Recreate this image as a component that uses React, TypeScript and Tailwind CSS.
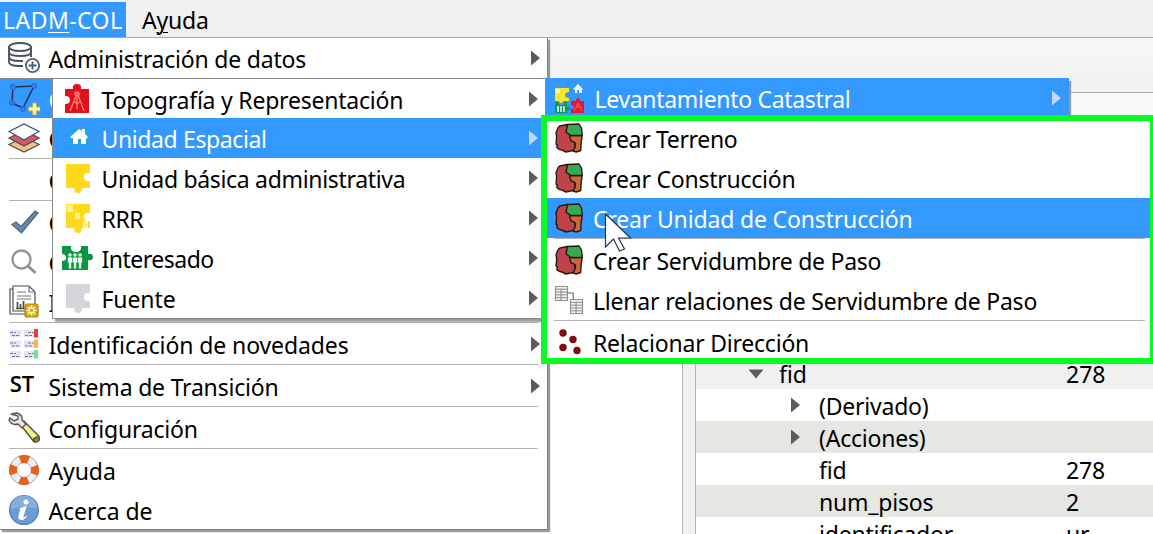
import type { ReactNode } from "react";

function Arrow({ light = false }: { light?: boolean }) {
  return (
    <svg width="9" height="16" viewBox="0 0 9 16" className="shrink-0">
      <path d="M0 0.5 L9 8 L0 15.5 Z" fill={light ? "#b9d9ff" : "#5c5c5c"} />
    </svg>
  );
}

function DatabaseIcon() {
  return (
    <svg width="32" height="32" viewBox="0 0 32 32" fill="none" stroke="#4a535d" strokeWidth="1.9">
      <ellipse cx="12" cy="5" rx="11" ry="4" fill="#fff" />
      <path d="M1 5v15c0 2.6 5 4 11 4h3M23 5v10M1 10c0 2.600 5 4 11 4s11-1.400 11-4M1 15c0 2.600 5 4 11 4h3" />
      <circle cx="24.500" cy="23.500" r="6.600" fill="#fff" stroke="#566573" />
      <path d="M24.500 19.500v8M20.500 23.500h8" stroke="#43617c" />
    </svg>
  );
}

function PolygonIcon() {
  return (
    <svg width="32" height="32" viewBox="0 0 32 32" fill="none">
      <path d="M5 4L26 3L15 25L4 20Z" stroke="#26344c" strokeWidth="1.500" />
      <g fill="#2f80ed" stroke="#2265cc">
        <circle cx="5" cy="4" r="2.500" />
        <circle cx="26" cy="3" r="2.500" />
        <circle cx="4" cy="20" r="2.500" />
        <circle cx="15" cy="26" r="2.500" />
      </g>
      <path d="M24.500 20h4v4h4v4h-4v4h-4v-4h-4v-4h4z" fill="#fdf8a0" stroke="#a8ae63" />
    </svg>
  );
}

function LayersIcon() {
  return (
    <svg width="32" height="30" viewBox="0 0 32 30" stroke="#4c4f59" strokeWidth="1.200">
      <path d="M1 21.500L16 14l15 7.500L16 29z" fill="#f9c184" />
      <path d="M1 15L16 7.500L31 15l-15 8z" fill="#d9596a" />
      <path d="M1 8.500L16 1l15 7.500L16 17z" fill="#fcfdff" stroke="#3f5069" />
    </svg>
  );
}

function CheckIcon() {
  return (
    <svg width="28" height="24" viewBox="0 0 28 24" className="ml-0.5">
      <path d="M1 14.500l4-2.500 5 4.500L24 1l3 2L10.500 23z" fill="#5b8fb9" stroke="#55616c" strokeWidth="1.200" />
    </svg>
  );
}

function SearchIcon() {
  return (
    <svg width="26" height="26" viewBox="0 0 26 26" fill="none" stroke="#929292">
      <circle cx="10.500" cy="10.500" r="9" strokeWidth="2.300" />
      <path d="M17 17l7.500 7" strokeWidth="3" />
    </svg>
  );
}

function ReportIcon() {
  return (
    <svg width="30" height="34" viewBox="0 0 30 34" fill="none" stroke="#4d4d4d" strokeWidth="1.200">
      <path d="M4 4H1v25h17" />
      <path d="M4 1h16l6 6v19H4z" fill="#fff" />
      <path d="M20 1v6h6M8 7h9M8 11h14M8 14h14" stroke="#777" />
      <path d="M8.500 17v6M11.500 19v4M14.500 16v7M7 23.500h11" strokeWidth="1.700" />
      <rect x="16" y="19" width="13" height="13" rx="2" fill="#d8a51a" stroke="#b88706" />
      <path d="M22.500 20.500v10M17.500 25.500h10M19 22l7 7M26 22l-7 7" stroke="#fffbd0" strokeWidth="1.700" />
      <circle cx="22.500" cy="25.500" r="1.700" fill="#d8a51a" stroke="none" />
    </svg>
  );
}

function ChangesIcon() {
  const marks = [
    { y: 1, color: "#e83b4a" },
    { y: 11.5, color: "#fbb64d" },
    { y: 22, color: "#6be39b" },
  ];
  return (
    <svg width="30" height="30" viewBox="0 0 30 30">
      {marks.map(({ y, color }) => (
        <g key={y}>
          <rect x="1" y={y} width="11" height="7" fill="#e4e4f4" />
          <path d={`M1 ${y + 2.5}h6M3 ${y + 5.5}h8`} stroke="#77778e" strokeDasharray="3 1" />
          <rect x="15" y={y} width="10" height="7" fill="#e4e4f4" />
          <path d={`M19 ${y + 2.5}h6M16 ${y + 5.5}h8`} stroke="#77778e" strokeDasharray="3 1" />
          <rect x="25" y={y - 1} width="4" height="8.500" fill={color} />
        </g>
      ))}
    </svg>
  );
}

function WrenchIcon() {
  return (
    <svg width="34" height="32" viewBox="0 0 34 32">
      <path d="M13 12l4-3 15 15q1 4-5 6z" fill="#e3df78" stroke="#4c4c2b" strokeWidth="1.300" />
      <path d="M17 14l11 11" stroke="#fbf7b6" strokeWidth="2" />
      <path
        d="M4 2l6-1q6 2 5 7l4 4-4 4-4-4q-6 2-9-4l1-2 4 3 4-2V4z"
        fill="#e9e9e9"
        stroke="#555"
        strokeWidth="1.400"
      />
      <ellipse cx="29.500" cy="27.500" rx="3" ry="2.500" fill="#858252" stroke="#45452d" transform="rotate(-30 29.500 27.500)" />
    </svg>
  );
}

function LifebuoyIcon() {
  return (
    <svg width="32" height="32" viewBox="0 0 32 32" fill="none">
      <circle cx="16" cy="16" r="11" stroke="#eef0f2" strokeWidth="7.500" />
      <circle cx="16" cy="16" r="14.300" stroke="#b9bec4" strokeWidth="1.200" />
      <circle cx="16" cy="16" r="7.500" stroke="#b4b9be" />
      <circle
        cx="16"
        cy="16"
        r="11"
        stroke="#e6601e"
        strokeWidth="8"
        strokeDasharray="8.600 8.679"
        strokeDashoffset="4.300"
      />
    </svg>
  );
}

function InfoIcon() {
  return (
    <svg width="32" height="32" viewBox="0 0 32 32">
      <circle cx="16" cy="16" r="14.300" fill="#6c9bd2" stroke="#5585c4" strokeWidth="1.500" />
      <path d="M2.500 15a13.500 13.500 0 0 1 27 0q-13-4-27 0z" fill="#83aede" />
      <circle cx="18" cy="8" r="2.500" fill="#fff" />
      <path d="M12 14.500q3-.5 6-2l-3 10q-.5 2.500 3.500 0-3 4-6.500 3-2-.8-1-4l1.500-5z" fill="#fff" stroke="#fff" />
    </svg>
  );
}

function SurveyorIcon() {
  return (
    <svg width="24" height="30" viewBox="0 0 24 30">
      <path d="M0 5h8q-1-5 4-5t4 5h8v24H0v-9q5 0 5-4t-5-4z" fill="#e3101b" />
      <g fill="none" stroke="#ff8380" strokeWidth="1.300">
        <path d="M11.500 11L5 27M13 11l6 16M12 9v16M9 17l3 3 4-3" />
        <circle cx="12" cy="10" r="2" />
      </g>
    </svg>
  );
}

function HousePuzzleIcon() {
  return (
    <svg width="24" height="28" viewBox="0 0 24 28" className="ml-1">
      <path d="M0 4h24v20h-8q0 4-4 4t-4-4H0z" fill="#29a0ee" />
      <path d="M3 13l9-8 3 2V5h3v5l3 3-2 2v5h-5v-5h-3v5H6v-6H4z" fill="#fff" />
    </svg>
  );
}

function PuzzleIcon({ tone = "yellow", patches = false }: { tone?: "yellow" | "gray"; patches?: boolean }) {
  return (
    <svg width="24" height="30" viewBox="0 0 24 30" className="ml-0.5">
      <path
        d="M0 1h24v9q-6-1-6 4t6 4v7h-8q0 5-4 5t-4-5H0z"
        fill={tone === "yellow" ? "#ffd91b" : "#d4d4da"}
      />
      {patches && (
        <g fill="#fff19b">
          <rect x="1" y="2" width="6" height="7" />
          <rect x="9" y="10" width="5" height="6" />
          <rect x="17" y="18" width="5" height="7" />
        </g>
      )}
    </svg>
  );
}

function PeoplePuzzleIcon() {
  return (
    <svg width="31" height="26" viewBox="0 0 31 26">
      <path d="M0 1h9q-1 6 5 6t5-6h7v8q5-1 5 3t-5 3v10H0v-9q4 0 4-3.500T0 9z" fill="#0a963f" />
      {[8, 13, 18].map((x) => (
        <g key={x} fill="#e9fff0">
          <circle cx={x} cy="10" r="1.800" />
          <path d={`M${x - 2.2} 12.500h4.400v5h-1v6h-2.400v-6h-1z`} />
        </g>
      ))}
    </svg>
  );
}

function SurveyIcon() {
  return (
    <svg width="32" height="30" viewBox="0 0 32 30">
      <path d="M1 4h14v4q-4 0-4 3t4 3v3H9q0 2-2 2t-2-2H1z" fill="#f7e52a" />
      <rect x="2" y="5" width="4" height="4" fill="#fffac0" />
      <path d="M1 18h4v3h5v-3h3v5h3v3h-3v3H1z" fill="#129653" />
      <path d="M4 22v6M7 22v6M10 22v6" stroke="#e8fff2" strokeWidth="1.500" />
      <path d="M19 5l5-5 5 5-1 1v3h-3V6h-2v3h-2V6z" fill="#e8faff" />
      <path d="M17 17h5q0-3 2-3t2 3h4v12H17v-4q3 0 3-2t-3-2z" fill="#e3192c" />
      <path d="M24 19l-4 8M24 19l4 8M22 23h4" stroke="#f4606a" />
    </svg>
  );
}

function ParcelIcon() {
  return (
    <svg width="28" height="30" viewBox="0 0 28 30" stroke="#2d1715" strokeWidth="1.400" strokeLinejoin="round" className="mr-0.5">
      <path d="M12 1.500L5 3Q3 4 2.500 6L1 10q1 3 .3 8L1 21q2 1 .8 3.500Q4 27 7 27l4 2 9-2V12z" fill="#c0434a" />
      <path d="M14.500 12.500H27q0 4-.8 6l-.5 9-4.500 1.500-3.200-1 2-3.500.5-4.500q-3-2-4.500-2z" fill="#ca6838" />
      <path d="M12.500 1.500L24 1l2.500 4 .8 7.500H16L11 9z" fill="#35aa51" />
    </svg>
  );
}

function TablesIcon() {
  const tables = [
    { x: 1, y: 1 },
    { x: 17, y: 15 },
  ];
  return (
    <svg width="30" height="30" viewBox="0 0 32 32" fill="none" stroke="#888" className="mr-0.5">
      {tables.map(({ x, y }) => (
        <g key={x}>
          <rect x={x + 0.5} y={y + 0.5} width="13" height="15" fill="#efefef" />
          <path d={`M${x} ${y + 3.5}h14M${x} ${y + 6.5}h14M${x} ${y + 9.5}h14M${x} ${y + 12.5}h14M${x + 6.5} ${y + 3}v13`} />
        </g>
      ))}
      <path d="M14 8.500h6.500V15" stroke="#555" />
    </svg>
  );
}

function DotsIcon() {
  return (
    <svg width="32" height="30" viewBox="0 0 32 30" fill="#800d14">
      <circle cx="9" cy="6" r="3.700" />
      <circle cx="19" cy="12.500" r="3.700" />
      <circle cx="9" cy="20.500" r="3.700" />
      <circle cx="23" cy="23.500" r="3.700" />
    </svg>
  );
}

type ItemProps = {
  icon?: ReactNode;
  label: string;
  tracking?: string;
  height?: string;
  active?: boolean;
  arrow?: boolean;
};

function MenuItem({ icon, label, tracking = "", height = "h-10", active = false, arrow = false }: ItemProps) {
  return (
    <div className={`flex shrink-0 items-center pr-[7px] ${height} ${active ? "bg-[#3399ff] text-white" : ""}`}>
      <div className="flex w-[48px] shrink-0 items-center justify-center">{icon}</div>
      <span className={`flex-1 pt-0.5 pl-[0.5px] leading-[38px] ${tracking}`}>{label}</span>
      {arrow && <Arrow light={active} />}
    </div>
  );
}

function ActionItem({ icon, label, tracking = "", active = false }: ItemProps) {
  return (
    <div className={`flex h-10 items-center ${active ? "bg-[#3399ff] text-white" : ""}`}>
      <div className="flex w-[46px] shrink-0 items-center justify-center">{icon}</div>
      <span className={`pt-0.5 leading-[38px] ${tracking}`}>{label}</span>
    </div>
  );
}

function Separator() {
  return <div className="mr-[9px] ml-[9px] h-0.5 shrink-0 border-t border-[#b4b4b4]" />;
}

function TreeRow({ label, value, shade, arrow }: { label: string; value?: string; shade?: boolean; arrow?: boolean }) {
  return (
    <div className={`flex h-8 shrink-0 items-center ${shade ? "bg-[#e6e7e2]" : "bg-white"}`}>
      <div className="flex w-[123px] shrink-0 pl-[95px]">{arrow && <Arrow />}</div>
      <span className="w-[247px] shrink-0 pt-0.5 tracking-[-0.22px]">{label}</span>
      <span className="pt-0.5 tracking-[-0.1px]">{value}</span>
    </div>
  );
}

export default function App() {
  return (
    <div className="relative flex h-[534px] w-[1153px] flex-col overflow-hidden bg-white font-['Noto_Sans',sans-serif] text-[23px] whitespace-nowrap text-black">
      <header className="flex h-[38px] shrink-0 border-b border-[#a8a8a8] bg-[#f0f0f0]">
        <div className="mt-0.5 flex w-[126px] items-center bg-[#3399ff] pl-[3px] leading-9 text-white">
          <span className="tracking-[0.45px]">
            LAD<span className="underline decoration-1 underline-offset-[3px]">M</span>-COL
          </span>
        </div>
        <span className="pl-4 leading-10 tracking-[-0.2px]">
          A<span className="underline decoration-1 underline-offset-[3px]">y</span>uda
        </span>
      </header>
      <div className="h-[55px] shrink-0 border-b border-[#aaa] bg-linear-to-b from-[#f8f8f8] to-[#f0f0f0]" />
      <main className="flex min-h-0 flex-1">
        <div className="w-[682px] shrink-0 bg-white" />
        <div className="w-[14px] shrink-0 border-x border-[#b4b4b4] bg-[#f0f0f0]" />
        <div className="flex min-w-0 flex-1 flex-col overflow-hidden">
          <div className="h-[265px] shrink-0 bg-[#f8f8f8]" />
          <div className="flex h-[31px] shrink-0 items-center bg-[#f0f0f0]">
            <svg width="16" height="10" viewBox="0 0 16 10" className="ml-[52px] shrink-0">
              <path d="M0.500 0.500h15L8 9.500z" fill="#5c5c5c" />
            </svg>
            <span className="ml-[15px] w-[287px] pt-0.5">fid</span>
            <span className="pt-0.5">278</span>
          </div>
          <TreeRow label="(Derivado)" arrow />
          <TreeRow label="(Acciones)" arrow shade />
          <TreeRow label="fid" value="278" />
          <TreeRow label="num_pisos" value="2" shade />
          <TreeRow label="identificador" value="ur" />
        </div>
      </main>

      <nav className="absolute top-[38px] left-0 flex h-[492px] w-[548px] flex-col border-r border-b border-[#808080] bg-white shadow-[2px_2px_1px_#9a9a9a]">
        <MenuItem icon={<DatabaseIcon />} label="Administración de datos" tracking="tracking-[-0.2px]" arrow />
        <div className="h-px shrink-0 bg-[#888]" />
        <MenuItem icon={<PolygonIcon />} label="C" height="h-[39px]" active />
        <MenuItem icon={<LayersIcon />} label="C" />
        <Separator />
        <MenuItem label="C" />
        <Separator />
        <MenuItem icon={<CheckIcon />} label="C" />
        <MenuItem icon={<SearchIcon />} label="C" />
        <MenuItem icon={<ReportIcon />} label="I" />
        <Separator />
        <MenuItem
          icon={<ChangesIcon />}
          label="Identificación de novedades"
          tracking="tracking-[-0.1px]"
          arrow
        />
        <Separator />
        <MenuItem
          icon={<span className="pr-1 pb-1.5 font-['Open_Sans',sans-serif] text-[22px] leading-8 font-semibold">ST</span>}
          label="Sistema de Transición"
          tracking="tracking-[-0.2px]"
          arrow
        />
        <Separator />
        <MenuItem icon={<WrenchIcon />} label="Configuración" tracking="tracking-[-0.2px]" />
        <Separator />
        <MenuItem icon={<LifebuoyIcon />} label="Ayuda" tracking="tracking-[-0.1px]" />
        <MenuItem icon={<InfoIcon />} label="Acerca de" tracking="tracking-[-0.1px]" />
      </nav>

      <nav className="absolute top-[78px] left-[52px] w-[494px] border border-[#8a8a8a] bg-white shadow-[3px_3px_2px_#999]">
        <div className="-mb-px">
          <MenuItem
            icon={<SurveyorIcon />}
            label="Topografía y Representación"
            tracking="tracking-[-0.22px]"
            arrow
          />
        </div>
        <MenuItem icon={<HousePuzzleIcon />} label="Unidad Espacial" tracking="tracking-[-0.38px]" active arrow />
        <MenuItem icon={<PuzzleIcon />} label="Unidad básica administrativa" tracking="tracking-[-0.32px]" arrow />
        <MenuItem icon={<PuzzleIcon patches />} label="RRR" tracking="tracking-[-0.4px]" arrow />
        <MenuItem icon={<PeoplePuzzleIcon />} label="Interesado" tracking="tracking-[-0.5px]" arrow />
        <MenuItem icon={<PuzzleIcon tone="gray" />} label="Fuente" tracking="tracking-[-0.1px]" arrow />
      </nav>

      <nav className="absolute top-[78px] left-[546px] flex h-[40px] w-[523px] items-center bg-[#3399ff] pr-[8px] pl-2 text-white shadow-[2px_3px_1px_#999]">
        <div className="pt-0.5">
          <SurveyIcon />
        </div>
        <span className="flex-1 pt-0.5 pl-[8.5px] leading-[38px] tracking-[-0.32px]">Levantamiento Catastral</span>
        <Arrow light />
      </nav>

      <nav className="absolute top-[115px] left-[541px] h-[249px] w-[614px] border-[6px] border-r-[5px] border-[#08fc21] bg-white">
        <div className="-mt-[3px]">
          <ActionItem icon={<ParcelIcon />} label="Crear Terreno" tracking="tracking-[-0.33px]" />
          <ActionItem icon={<ParcelIcon />} label="Crear Construcción" tracking="tracking-[-0.24px]" />
          <ActionItem icon={<ParcelIcon />} label="Crear Unidad de Construcción" tracking="tracking-[-0.16px]" active />
          <div className="mr-[5px] ml-[7px] h-0.5 border-t border-[#b4b4b4]" />
          <ActionItem icon={<ParcelIcon />} label="Crear Servidumbre de Paso" tracking="tracking-[-0.25px]" />
          <ActionItem
            icon={<TablesIcon />}
            label="Llenar relaciones de Servidumbre de Paso"
            tracking="tracking-[-0.2px]"
          />
          <div className="mr-[5px] ml-[7px] h-0.5 border-t border-[#b4b4b4]" />
          <ActionItem icon={<DotsIcon />} label="Relacionar Dirección" tracking="tracking-[-0.22px]" />
        </div>
      </nav>

      <svg width="28" height="42" viewBox="0 0 28 42" className="absolute top-[212px] left-[604px]">
        <path d="M1.500 2v33l8-8 6 12 5-2-6-11h12z" fill="#fff" stroke="#263750" strokeWidth="1.200" />
      </svg>
    </div>
  );
}
